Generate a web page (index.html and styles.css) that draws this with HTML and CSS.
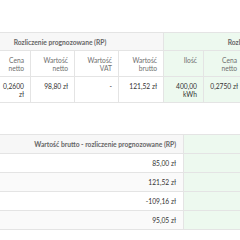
FILE: index.html
```html
<!DOCTYPE html>
<html lang="pl">
<head>
<meta charset="utf-8">
<link rel="stylesheet" href="styles.css">
</head>
<body>
<div class="page">
  <div class="wrap">
    <table class="grid top">
      <colgroup>
        <col class="w40"><col class="w34"><col class="w44"><col class="w44"><col class="w45">
        <col class="w40"><col class="w40"><col class="w44"><col class="w44"><col class="w44">
      </colgroup>
      <thead>
        <tr class="group">
          <th colspan="5" class="title">Rozliczenie prognozowane (RP)</th>
          <th colspan="5" class="title g">Rozliczenie rzeczywiste (RR)</th>
        </tr>
        <tr class="heads">
          <th>Ilość</th>
          <th>Cena netto</th>
          <th>Wartość netto</th>
          <th>Wartość VAT</th>
          <th>Wartość brutto</th>
          <th class="g">Ilość</th>
          <th class="g">Cena netto</th>
          <th class="g">Wartość netto</th>
          <th class="g">Wartość VAT</th>
          <th class="g">Wartość brutto</th>
        </tr>
      </thead>
      <tbody>
        <tr>
          <td>380,00 kWh</td>
          <td>0,2600 zł</td>
          <td>98,80 zł</td>
          <td>-</td>
          <td>121,52 zł</td>
          <td class="g">400,00 kWh</td>
          <td class="g nowrap">0,2750 zł</td>
          <td class="g">110,00 zł</td>
          <td class="g">25,30 zł</td>
          <td class="g">135,30 zł</td>
        </tr>
      </tbody>
    </table>
  </div>

  <div class="wrap">
    <table class="grid bottom">
      <colgroup><col class="w213"><col class="w120"></colgroup>
      <thead>
        <tr class="group">
          <th class="title">Wartość brutto - rozliczenie prognozowane (RP)</th>
          <th class="title g"></th>
        </tr>
      </thead>
      <tbody>
        <tr><td>85,00 zł</td><td class="g"></td></tr>
        <tr class="alt"><td>121,52 zł</td><td class="g"></td></tr>
        <tr><td>-109,16 zł</td><td class="g"></td></tr>
        <tr class="alt"><td>95,05 zł</td><td class="g"></td></tr>
      </tbody>
    </table>
  </div>
</div>
</body>
</html>
```

FILE: styles.css
```css
html, body {
  margin: 0;
  padding: 0;
  background: #ffffff;
  overflow: hidden;
}

.page {
  width: 240px;
  height: 240px;
  overflow: hidden;
  padding-top: 32px;
  box-sizing: border-box;
  display: flex;
  flex-direction: column;
  gap: 31px;
  font-family: "Lato", "Open Sans", sans-serif;
  font-size: 6.7px;
  line-height: 8px;
  color: #333333;
}

.wrap {
  width: 240px;
  overflow: hidden;
}

.grid {
  border-collapse: collapse;
  table-layout: fixed;
}

.top {
  width: 420px;
  margin-left: -44px;
}

.bottom {
  width: 333px;
  margin-left: -30px;
}

.w34 { width: 34px; }
.w40 { width: 40px; }
.w44 { width: 44px; }
.w45 { width: 45px; }
.w213 { width: 213px; }
.w120 { width: 120px; }

.grid th,
.grid td {
  border: 1px solid #e4e4e4;
  padding: 4.5px 6px;
  text-align: right;
  vertical-align: top;
  white-space: normal;
  overflow: hidden;
}

.grid td.nowrap {
  white-space: nowrap;
  padding-right: 5px;
  padding-left: 4px;
}

.group th {
  background: #f7f7f7;
  font-weight: 700;
  color: #666666;
  text-align: center;
  white-space: nowrap;
  overflow: visible;
}

.heads th {
  font-weight: 400;
  color: #707070;
  background: #ffffff;
}

.top td {
  color: #333333;
}

.bottom th,
.bottom td {
  padding: 5px 7px;
  white-space: nowrap;
}

.bottom .group th {
  text-align: right;
}

.bottom td {
  background: #ffffff;
}

.bottom tr.alt td {
  background: #fafafa;
}

.grid .g,
.grid tr.alt .g,
.group .g,
.heads .g {
  background: #edf9ef;
}
```
